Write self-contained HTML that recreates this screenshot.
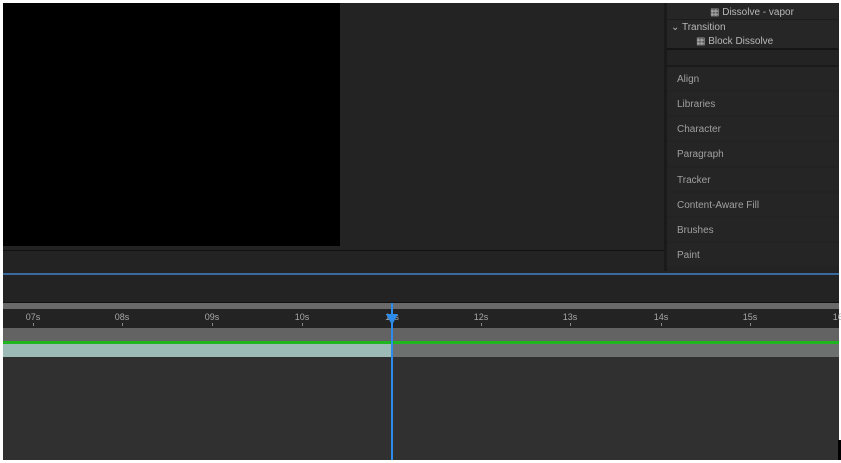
<!DOCTYPE html><html><head><style>
body{margin:0;width:841px;height:463px;background:#fff;position:relative;overflow:hidden;font-family:"Liberation Sans",sans-serif}
div{position:absolute;box-sizing:border-box}
.t{color:#9a9a9a;font-size:10px}
.row{left:667px;width:171px;height:23px;background:#252525;color:#a0a0a0;font-size:10px;padding:7px 0 0 10px}
.lab{top:312px;color:#a8a8a8;font-size:9px;width:30px;margin-left:-15px;text-align:center}
.tk{top:323px;width:1px;height:3px;background:#888}
</style></head><body>
<div style="left:3px;top:3px;width:836px;height:457px;background:#232323"></div>
<div style="left:3px;top:3px;width:337px;height:243px;background:#000"></div>
<div style="left:3px;top:250px;width:661px;height:1px;background:#111"></div>
<div style="left:664px;top:3px;width:3px;height:268px;background:#1a1a1a"></div>
<div style="left:667px;top:3px;width:171px;height:45px;background:#262626"></div>
<div class="t" style="left:710px;top:7px;color:#b8b8b8">▦ Dissolve - vapor</div>
<div style="left:667px;top:19px;width:171px;height:1px;background:#1c1c1c"></div>
<div class="t" style="left:671px;top:22px;color:#b8b8b8">⌄ Transition</div>
<div class="t" style="left:696px;top:36px;color:#b8b8b8">▦ Block Dissolve</div>
<div style="left:667px;top:48px;width:171px;height:2px;background:#151515"></div>
<div style="left:667px;top:65px;width:171px;height:2px;background:#1a1a1a"></div>
<div class="row" style="top:67px">Align</div>
<div class="row" style="top:92px">Libraries</div>
<div class="row" style="top:117px">Character</div>
<div class="row" style="top:142px">Paragraph</div>
<div class="row" style="top:168px">Tracker</div>
<div class="row" style="top:193px">Content-Aware Fill</div>
<div class="row" style="top:218px">Brushes</div>
<div class="row" style="top:243px">Paint</div>
<div style="left:3px;top:273px;width:836px;height:2px;background:#3b6a9e"></div>
<div style="left:3px;top:302px;width:836px;height:1px;background:#111"></div>
<div style="left:3px;top:303px;width:836px;height:6px;background:#6a6a6a"></div>
<div style="left:3px;top:309px;width:836px;height:19px;background:#232323"></div>
<div class="lab" style="left:33px">07s</div><div class="tk" style="left:33px"></div>
<div class="lab" style="left:122px">08s</div><div class="tk" style="left:122px"></div>
<div class="lab" style="left:212px">09s</div><div class="tk" style="left:212px"></div>
<div class="lab" style="left:302px">10s</div><div class="tk" style="left:302px"></div>
<div class="lab" style="left:392px">11s</div>
<div class="lab" style="left:481px">12s</div><div class="tk" style="left:481px"></div>
<div class="lab" style="left:570px">13s</div><div class="tk" style="left:570px"></div>
<div class="lab" style="left:661px">14s</div><div class="tk" style="left:661px"></div>
<div class="lab" style="left:750px">15s</div><div class="tk" style="left:750px"></div>
<div class="lab" style="left:840px">16s</div>
<div style="left:3px;top:328px;width:836px;height:13px;background:#636363"></div>
<div style="left:3px;top:341px;width:836px;height:3px;background:#1fb51f"></div>
<div style="left:3px;top:344px;width:836px;height:13px;background:#6c7170"></div>
<div style="left:3px;top:344px;width:389px;height:13px;background:#9dbbb6"></div>
<div style="left:3px;top:357px;width:836px;height:103px;background:#303030"></div>
<div style="left:391px;top:303px;width:2px;height:157px;background:#2d8ceb"></div>
<div style="left:386px;top:314px;width:0;height:0;border-left:6px solid transparent;border-right:6px solid transparent;border-top:11px solid #2d8ceb"></div>
<div style="left:838px;top:440px;width:3px;height:20px;background:#000"></div>
</body></html>
